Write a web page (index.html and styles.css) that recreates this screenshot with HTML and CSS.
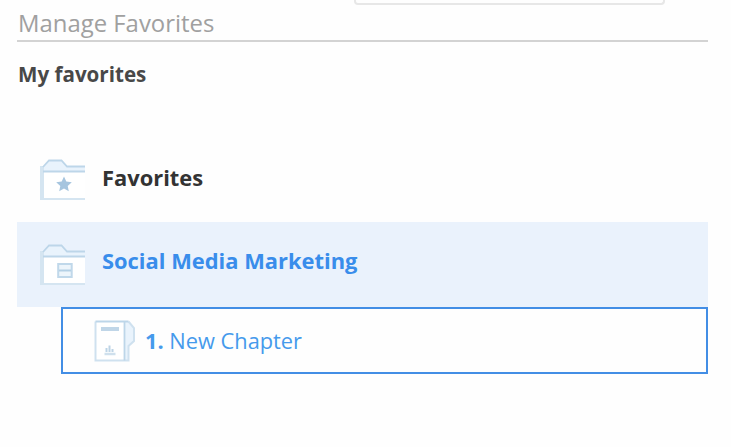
FILE: index.html
```html
<!DOCTYPE html>
<html lang="en">
<head>
    <meta charset="UTF-8">
    <meta name="viewport" content="width=device-width, initial-scale=1.0">
    <title>Manage Favorites</title>
    <link rel="stylesheet" href="styles.css">
</head>
<body>
    <div class="page">
        <div class="searchBox"></div>
        <h1 class="title"><span>Manage Favorites</span></h1>
        <h2 class="subtitle"><span>My favorites</span></h2>

        <div class="folderList">
            <div class="folder">
                <svg class="folderIcon" width="46" height="44" viewBox="0 0 46 44">
                    <path d="M1 8H4.5L9 2.5H21.5L27 8.5H45V13H1Z" fill="#e9f3fc"/>
                    <path d="M3 13H45V41H3Z" fill="#fff"/>
                    <path d="M1 8V42M3 8V42" stroke="#d5e5f1" stroke-width="2"/>
                    <path d="M3 41H45" stroke="#d5e5f1" stroke-width="2"/>
                    <path d="M3 9L9 2.5H21.5L27 8.5H45M3 13.5H45" fill="none" stroke="#bdd6e9" stroke-width="1.8"/>
                    <path d="M24 18.5L26.3 23.6L31.8 24.2L27.7 27.9L28.8 33.3L24 30.6L19.2 33.3L20.3 27.9L16.2 24.2L21.7 23.6Z" fill="#a6c5df"/>
                </svg>
                <span class="folderName">Favorites</span>
            </div>
            <div class="folder selected">
                <svg class="folderIcon" width="46" height="44" viewBox="0 0 46 44">
                    <path d="M1 8H4.5L9 2.5H21.5L27 8.5H45V13H1Z" fill="#e9f3fc"/>
                    <path d="M3 13H45V41H3Z" fill="#fff"/>
                    <path d="M1 8V42M3 8V42" stroke="#d5e5f1" stroke-width="2"/>
                    <path d="M3 41H45" stroke="#d5e5f1" stroke-width="2"/>
                    <path d="M3 9L9 2.5H21.5L27 8.5H45M3 13.5H45" fill="none" stroke="#bdd6e9" stroke-width="1.8"/>
                    <rect x="18.2" y="21" width="13.5" height="13" fill="#edf5fb" stroke="#c0d8ea" stroke-width="2"/>
                    <path d="M19 27.5H31" stroke="#b4d0e5" stroke-width="2"/>
                </svg>
                <span class="folderName">Social Media Marketing</span>
            </div>
            <div class="chapter">
                <svg class="chapterIcon" width="42" height="42" viewBox="0 0 42 42">
                    <path d="M1.5 1.5H34V40.5H1.5Z" fill="#fff"/>
                    <path d="M30 1.5H34.5L40 8V21L34.5 26V40.5H30Z" fill="#e9f3fc"/>
                    <path d="M1.5 1.5V40.5H34.5V26L40 21V8L34.5 1.5" fill="none" stroke="#cfe1ef" stroke-width="2"/>
                    <path d="M1.5 1.5H34.5M30.5 1.5V40.5" fill="none" stroke="#bdd6e9" stroke-width="1.8"/>
                    <path d="M7 9H25" stroke="#c0d6e8" stroke-width="4"/>
                    <path d="M12.5 28V32M15.5 25.5V32M18.5 29V32" stroke="#bdd4e6" stroke-width="2"/>
                    <path d="M10.5 34H21.5" stroke="#cfe0ed" stroke-width="2.5"/>
                </svg>
                <span class="chapterName"><b>1.</b> New Chapter</span>
            </div>
        </div>
    </div>
</body>
</html>
```
FILE: styles.css
```css
* {
    box-sizing: border-box;
}
body {
    margin: 0;
    padding: 0;
    background-color: #fefefe;
    font-family: "Open Sans", Arial, sans-serif;
}
.page {
    padding: 0 23px 0 17px;
    height: 447px;
    overflow: hidden;
}
.searchBox {
    width: 311px;
    height: 5px;
    margin-left: 337px;
    border: 2px solid #e7e7e7;
    border-top: none;
    border-radius: 0 0 4px 4px;
}
.title {
    display: flex;
    align-items: center;
    height: 37px;
    margin: 0;
    padding: 0 0 1px 1px;
    border-bottom: 2px solid #d3d3d3;
    color: #a0a0a0;
    font-size: 23.9px;
    font-weight: 400;
}
.subtitle {
    display: flex;
    align-items: center;
    height: 65px;
    margin: 0;
    padding: 0 0 1px 1px;
    color: #484848;
    font-size: 20.6px;
    font-weight: 700;
}
.folderList {
    margin-top: 30px;
}
.folder {
    display: flex;
    align-items: center;
    height: 85px;
    padding-left: 23px;
    color: #333;
}
.folderName {
    margin-left: 16px;
    padding-bottom: 5px;
    font-size: 21.9px;
    font-weight: 700;
}
.selected {
    background-color: #eaf2fc;
    color: #398deb;
}
.selected .folderName {
    padding-bottom: 8px;
}
.chapter {
    display: flex;
    align-items: center;
    height: 67px;
    margin-left: 44px;
    padding-left: 31px;
    border: 2px solid #438ee5;
    color: #459aec;
}
.chapterName {
    margin-left: 9px;
    font-size: 21.8px;
}
```
